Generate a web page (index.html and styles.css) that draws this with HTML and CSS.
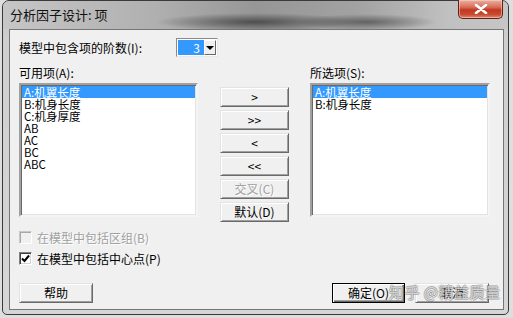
FILE: index.html
```html
<!DOCTYPE html>
<html lang="zh-CN">
<head>
    <meta charset="UTF-8">
    <title>分析因子设计: 项</title>
    <link rel="stylesheet" href="styles.css">
</head>
<body>

    <div class="window">
        <!-- Title bar -->
        <div class="titlebar">
            <span class="title">分析因子设计: 项</span>
            <div class="close-btn">
                <svg width="14" height="10" viewBox="0 0 14 10">
                    <path d="M2 1 L12 9 M12 1 L2 9" stroke="#fff" stroke-width="2.6" stroke-linecap="round"/>
                </svg>
            </div>
        </div>

        <div class="client">
            <!-- Order of terms -->
            <div class="order-row">
                <span class="order-label">模型中包含项的阶数(I):</span>
                <div class="combo">
                    <span class="combo-value">3</span>
                    <span class="combo-btn"><i class="arrow"></i></span>
                </div>
            </div>

            <div class="captions">
                <span class="caption-left">可用项(A):</span>
                <span class="caption-right">所选项(S):</span>
            </div>

            <!-- Lists and move buttons -->
            <div class="lists">
                <ul class="listbox list-left">
                    <li class="selected">A:机翼长度</li>
                    <li>B:机身长度</li>
                    <li>C:机身厚度</li>
                    <li>AB</li>
                    <li>AC</li>
                    <li>BC</li>
                    <li>ABC</li>
                </ul>

                <div class="move-btns">
                    <button class="btn">&gt;</button>
                    <button class="btn">&gt;&gt;</button>
                    <button class="btn">&lt;</button>
                    <button class="btn">&lt;&lt;</button>
                    <button class="btn disabled">交叉(C)</button>
                    <button class="btn">默认(D)</button>
                </div>

                <ul class="listbox list-right">
                    <li class="selected">A:机翼长度</li>
                    <li>B:机身长度</li>
                </ul>
            </div>

            <!-- Options -->
            <label class="check-row first disabled">
                <span class="checkbox"></span>
                在模型中包括区组(B)
            </label>
            <label class="check-row">
                <span class="checkbox checked">
                    <svg width="9" height="9" viewBox="0 0 9 9">
                        <path d="M1 4.5 L3.5 7 L8 1.5" fill="none" stroke="#000" stroke-width="2"/>
                    </svg>
                </span>
                在模型中包括中心点(P)
            </label>

            <!-- Footer -->
            <div class="footer">
                <button class="btn btn-wide">帮助</button>
                <div class="footer-right">
                    <button class="btn btn-wide default">确定(O)</button>
                    <button class="btn btn-wide">取消</button>
                </div>
            </div>
        </div>

        <div class="watermark">知乎 @精益质量</div>
    </div>

</body>
</html>
```

FILE: styles.css
```css
* {
    margin: 0;
    padding: 0;
    box-sizing: border-box;
}

body {
    width: 513px;
    height: 318px;
    overflow: hidden;
    background-color: #dedede;
    font-family: "Noto Sans CJK SC", "Liberation Sans", sans-serif;
    font-size: 12px;
    color: #000;
}

.window {
    position: relative;
    height: 315px;
    margin: 0 4px 0 2px;
    border: 1px solid #3a3a3a;
    border-radius: 7px 7px 5px 5px;
    background: linear-gradient(to bottom, #c4c4c4 0, #cfcfcf 40px, #d6d6d6 100%);
    display: flex;
    flex-direction: column;
}

/* Title bar */
.titlebar {
    height: 28px;
    display: flex;
    align-items: flex-start;
    border-radius: 6px 6px 0 0;
    background:
        radial-gradient(ellipse 100px 9px at 50% 21px, rgba(60, 60, 60, 0.8), rgba(60, 60, 60, 0)),
        radial-gradient(ellipse 70px 8px at 72% 21px, rgba(70, 70, 70, 0.7), rgba(70, 70, 70, 0)),
        linear-gradient(to right, #c6c6c6 0, #b0b0b0 30%, #969696 50%, #a2a2a2 70%, #c0c0c0 88%, #c6c6c6 100%);
}

.title {
    padding: 5px 0 0 7px;
    font-size: 13px;
    line-height: 17px;
    color: #111;
}

.close-btn {
    margin-left: auto;
    margin-right: 5px;
    width: 45px;
    height: 19px;
    margin-top: -1px;
    border: 1px solid #5e2218;
    border-top: none;
    border-radius: 0 0 5px 5px;
    background: linear-gradient(to bottom, #eab0a2 0, #d86d58 40%, #c0381f 55%, #c84a30 80%, #e08a70 100%);
    box-shadow: inset 0 0 0 1px rgba(255, 220, 210, 0.5);
    display: flex;
    align-items: center;
    justify-content: center;
}

/* Client area */
.client {
    height: 281px;
    margin: 0 4px 0 6px;
    padding: 0 13px 0 9px;
    border: 1px solid #767676;
    background-color: #f0f0f0;
}

.order-row {
    display: flex;
    align-items: center;
    margin-top: 8px;
    height: 19px;
}

.order-label {
    width: 157px;
}

.combo {
    width: 42px;
    height: 19px;
    display: flex;
    border: 1px solid #8a8a8a;
    border-right-color: #e8e8e8;
    border-bottom-color: #e8e8e8;
    padding: 1px;
    background-color: #fff;
}

.combo-value {
    width: 26px;
    background-color: #3399ff;
    color: #fff;
    text-align: right;
    padding-right: 4px;
    line-height: 15px;
}

.combo-btn {
    width: 12px;
    background-color: #f0f0f0;
    border: 1px solid #fff;
    border-right-color: #696969;
    border-bottom-color: #696969;
    display: flex;
    align-items: center;
    justify-content: center;
}

.arrow {
    width: 0;
    height: 0;
    border-left: 4px solid transparent;
    border-right: 4px solid transparent;
    border-top: 4px solid #000;
}

.captions {
    display: flex;
    margin-top: 9px;
    height: 14px;
    line-height: 14px;
}

.caption-left {
    width: 291px;
}

/* Lists */
.lists {
    display: flex;
    margin-top: 3px;
}

.listbox {
    list-style: none;
    height: 134px;
    background-color: #fff;
    border: 2px solid #a0a0a0;
    border-right-color: #f4f4f4;
    border-bottom-color: #f4f4f4;
    box-shadow: inset 1px 1px 0 #696969, inset -1px -1px 0 #e3e3e3;
    padding: 1px 1px 0 1px;
}

.list-left {
    width: 179px;
}

.list-right {
    width: 180px;
}

.listbox li {
    height: 12px;
    line-height: 12px;
    font-size: 11.5px;
    padding-left: 2px;
    white-space: nowrap;
}

.listbox li.selected {
    background-color: #3399ff;
    color: #fff;
}

.move-btns {
    width: 69px;
    margin: 0 21px 0 22px;
    padding-top: 4px;
    display: flex;
    flex-direction: column;
    gap: 3px;
}

/* Buttons */
.btn {
    height: 20px;
    font-family: inherit;
    font-size: 12px;
    color: #000;
    background-color: #f0f0f0;
    border: 1px solid #e3e3e3;
    border-right-color: #696969;
    border-bottom-color: #696969;
    box-shadow: inset 1px 1px 0 #fff, inset -1px -1px 0 #a0a0a0;
    line-height: 16px;
}

.btn.disabled {
    color: #a0a0a0;
    text-shadow: 1px 1px 0 #fff;
}

.btn.default {
    border: 1px solid #000;
    box-shadow: inset 1px 1px 0 #fff, inset -1px -1px 0 #696969, inset -2px -2px 0 #a0a0a0;
}

.btn-wide {
    width: 74px;
}

/* Check boxes */
.check-row {
    display: flex;
    align-items: center;
    gap: 5px;
    height: 15px;
    margin-top: 6px;
}

.check-row.first {
    margin-top: 8px;
}

.check-row.disabled {
    color: #a0a0a0;
    text-shadow: 1px 1px 0 #fff;
}

.checkbox {
    width: 13px;
    height: 13px;
    background-color: #fff;
    border: 1px solid #808080;
    border-right-color: #fff;
    border-bottom-color: #fff;
    box-shadow: inset 1px 1px 0 #404040, inset -1px -1px 0 #d4d4d4;
    display: flex;
    align-items: center;
    justify-content: center;
}

.check-row.disabled .checkbox {
    background-color: #f0f0f0;
    border-color: #c8c8c8 #fff #fff #c8c8c8;
    box-shadow: inset 1px 1px 0 #a8a8a8;
}

.footer {
    display: flex;
    margin-top: 17px;
    padding-right: 1px;
}

.footer-right {
    margin-left: auto;
    display: flex;
    gap: 10px;
}

.footer-right .default {
    width: 73px;
}

/* Watermark over the footer */
.watermark {
    position: absolute;
    left: 386px;
    top: 281px;
    font-size: 15px;
    line-height: 20px;
    letter-spacing: 0.5px;
    color: rgba(255, 255, 255, 0.6);
    text-shadow: 1px 0 0 rgba(110, 110, 110, 0.45), -1px 0 0 rgba(110, 110, 110, 0.45),
        0 1px 0 rgba(110, 110, 110, 0.45), 0 -1px 0 rgba(110, 110, 110, 0.45);
    white-space: nowrap;
}
```
